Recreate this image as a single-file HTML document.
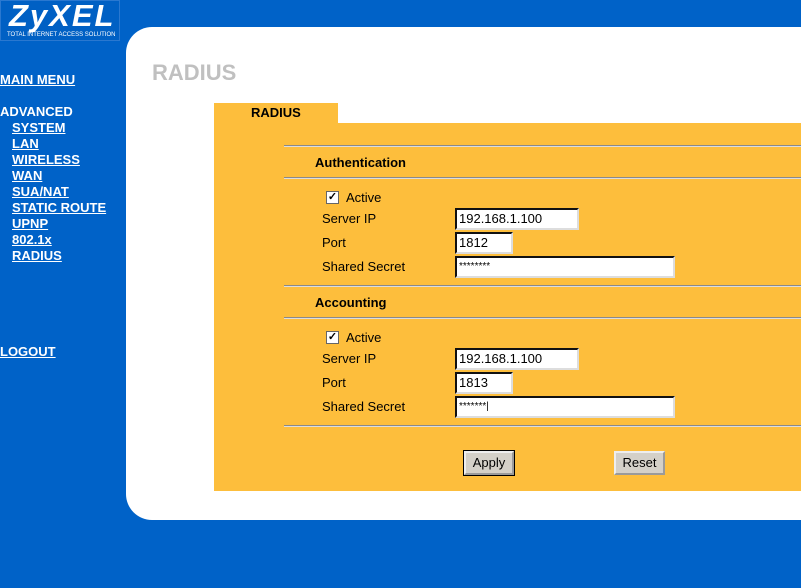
<!DOCTYPE html>
<html><head><style>
*{margin:0;padding:0;box-sizing:border-box}
body{width:801px;height:588px;background:#0062C8;position:relative;overflow:hidden;font-family:"Liberation Sans",sans-serif}
.logo{position:absolute;left:0;top:0;width:120px;height:41px;background:#0060C4;border:1px solid #2a78d0;color:#fff}
.logo b{position:absolute;left:8px;top:-3px;font-size:31px;font-style:italic;font-weight:900;letter-spacing:2px}
.logo s{position:absolute;left:6px;top:31px;font-size:6px;text-decoration:none;white-space:nowrap}
.nav{position:absolute;left:0;color:#fff;font-weight:bold;font-size:13px;text-decoration:underline;line-height:16px}
.panel{position:absolute;left:126px;top:27px;width:700px;height:493px;background:#fff;border-radius:26px 0 0 26px}
.title{position:absolute;left:152px;top:60px;font-size:22px;font-weight:bold;color:#c0c0c0}
.org{position:absolute;background:#FDBE3C}
.line{position:absolute;left:284px;width:517px;height:2px;background:#8a8a8a;border-bottom:1px solid #ddd}
.t{position:absolute;font-size:13px;color:#000}
.h{position:absolute;font-size:13px;font-weight:bold}
.in{position:absolute;background:#fff;border:2px inset #999;border-color:#666 #ddd #ddd #666;font-size:13px;padding-left:2px;line-height:17px}
.cb{position:absolute;width:13px;height:13px;background:#fff;border:1px solid #666;font-size:11px;line-height:11px;text-align:center;font-weight:bold}
.btn{position:absolute;height:24px;background:#d4d0c8;border:2px outset #eee;font-size:13px;text-align:center;line-height:19px}
</style></head><body>
<div class="logo"><b>ZyXEL</b><s>TOTAL INTERNET ACCESS SOLUTION</s></div>
<div class="nav" style="top:72px">MAIN MENU</div>
<div class="nav" style="top:104px;text-decoration:none">ADVANCED</div>
<div class="nav" style="top:120px;left:12px">SYSTEM<br>LAN<br>WIRELESS<br>WAN<br>SUA/NAT<br>STATIC ROUTE<br>UPNP<br>802.1x<br>RADIUS</div>
<div class="nav" style="top:344px">LOGOUT</div>
<div class="panel"></div>
<div class="title">RADIUS</div>
<div class="org" style="left:214px;top:103px;width:124px;height:22px"></div>
<div class="org" style="left:214px;top:123px;width:587px;height:368px"></div>
<div class="h" style="left:251px;top:105px">RADIUS</div>
<div class="line" style="top:145px"></div>
<div class="h" style="left:315px;top:155px">Authentication</div>
<div class="line" style="top:177px"></div>
<div class="cb" style="left:326px;top:191px">✓</div>
<div class="t" style="left:346px;top:190px">Active</div>
<div class="t" style="left:322px;top:211px">Server IP</div>
<div class="t" style="left:322px;top:235px">Port</div>
<div class="t" style="left:322px;top:259px">Shared Secret</div>
<div class="in" style="left:455px;top:208px;width:124px;height:22px">192.168.1.100</div>
<div class="in" style="left:455px;top:232px;width:58px;height:22px">1812</div>
<div class="in" style="left:455px;top:256px;width:220px;height:22px;font-size:10px">********</div>
<div class="line" style="top:285px"></div>
<div class="h" style="left:315px;top:295px">Accounting</div>
<div class="line" style="top:317px"></div>
<div class="cb" style="left:326px;top:331px">✓</div>
<div class="t" style="left:346px;top:330px">Active</div>
<div class="t" style="left:322px;top:351px">Server IP</div>
<div class="t" style="left:322px;top:375px">Port</div>
<div class="t" style="left:322px;top:399px">Shared Secret</div>
<div class="in" style="left:455px;top:348px;width:124px;height:22px">192.168.1.100</div>
<div class="in" style="left:455px;top:372px;width:58px;height:22px">1813</div>
<div class="in" style="left:455px;top:396px;width:220px;height:22px;font-size:10px">*******|</div>
<div class="line" style="top:425px"></div>
<div class="btn" style="left:464px;top:451px;width:50px;border:2px outset #eee;outline:1px solid #000">Apply</div>
<div class="btn" style="left:614px;top:451px;width:51px">Reset</div>
</body></html>
